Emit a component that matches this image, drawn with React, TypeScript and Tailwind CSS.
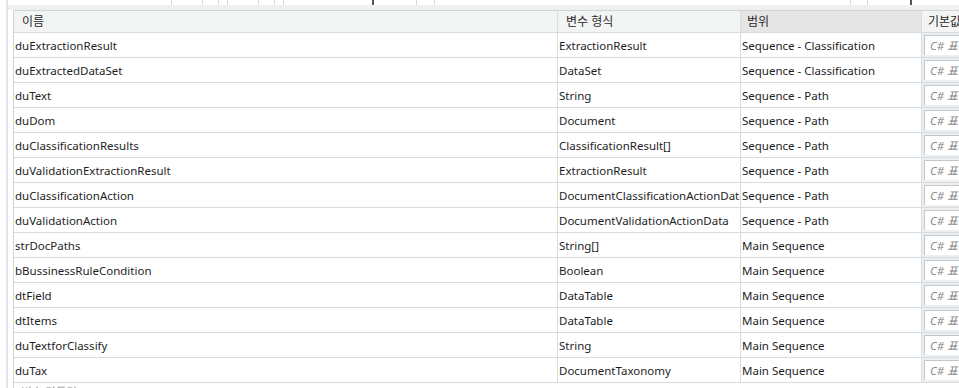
import React from "react";

const rows = [
  ["duExtractionResult", "ExtractionResult", "Sequence - Classification"],
  ["duExtractedDataSet", "DataSet", "Sequence - Classification"],
  ["duText", "String", "Sequence - Path"],
  ["duDom", "Document", "Sequence - Path"],
  ["duClassificationResults", "ClassificationResult[]", "Sequence - Path"],
  ["duValidationExtractionResult", "ExtractionResult", "Sequence - Path"],
  ["duClassificationAction", "DocumentClassificationActionData", "Sequence - Path"],
  ["duValidationAction", "DocumentValidationActionData", "Sequence - Path"],
  ["strDocPaths", "String[]", "Main Sequence"],
  ["bBussinessRuleCondition", "Boolean", "Main Sequence"],
  ["dtField", "DataTable", "Main Sequence"],
  ["dtItems", "DataTable", "Main Sequence"],
  ["duTextforClassify", "String", "Main Sequence"],
  ["duTax", "DocumentTaxonomy", "Main Sequence"],
];

// widths of the toolbar pieces peeking in at the top
const toolbar = [164, 31, 16, 9, 31, 16, 9, 90, 43, 18, 416, 17, 44];

const cell =
  "h-[25px] flex items-center overflow-hidden whitespace-nowrap border-b border-[#d5dde2] pt-[2px]";

export default function App() {
  return (
    <div className="flex h-[388px] w-[959px] overflow-hidden bg-white font-['Noto_Sans','Noto_Sans_CJK_KR',sans-serif] text-[11.5px] text-[#1e1e1e]">
      <div className="w-[6px] shrink-0 bg-white" />
      <div className="w-[2px] shrink-0 bg-[#e1e5e8]" />
      <div className="flex min-w-0 flex-1 flex-col">
        <div className="flex h-[5px] shrink-0">
          {toolbar.map((w, i) => (
            <div
              key={i}
              style={{ width: w }}
              className={
                i === 7 || i === 12
                  ? "shrink-0 border-r-2 border-[#555]"
                  : "shrink-0 border-r border-[#d4d8db]"
              }
            />
          ))}
        </div>
        <div className="h-[5px] shrink-0 bg-[#f0f0f0]" />
        <div className="flex flex-1 pl-[5px]">
          <div className="flex-1 border-l border-t border-[#cdd5da]">
            <div className="grid grid-cols-[544px_182px_181px_1fr]">
              <div className="flex h-[22px] items-center border-b border-r border-[#d5dde2] bg-[#f3f4f4] pl-[8px] pt-[1px] text-[12px] text-[#2a2a2a]">
                이름
              </div>
              <div className="flex h-[22px] items-center border-b border-[#d5dde2] bg-[#f3f4f4] pl-[8px] pt-[1px] text-[12px] text-[#2a2a2a]">
                변수 형식
              </div>
              <div className="flex h-[22px] items-center border-b border-l border-[#d5dde2] bg-[#e6e6e6] pl-[6px] pt-[1px] text-[12px] text-[#2a2a2a]">
                범위
              </div>
              <div className="flex h-[22px] items-center overflow-hidden whitespace-nowrap border-b border-l border-[#d5dde2] bg-[#f3f4f4] pl-[6px] pt-[1px] text-[12px] text-[#2a2a2a]">
                기본값
              </div>
              {rows.map(([name, type, scope]) => (
                <React.Fragment key={name}>
                  <div className={`${cell} border-r pl-[1px]`}>{name}</div>
                  <div className={`${cell} pl-[1px]`}>{type}</div>
                  <div className={`${cell} border-l pl-[1px]`}>{scope}</div>
                  <div className="flex h-[25px] overflow-hidden whitespace-nowrap border-b border-l border-[#d5dde2] bg-[#eceeef] py-[2px] pl-[2px]">
                    <div className="flex h-full w-full items-center border-l border-t border-[#c4c8cb] bg-white pl-[5px] pt-[1px] italic text-[#8a8a8a]">
                      C# 표현식 입력
                    </div>
                  </div>
                </React.Fragment>
              ))}
              <div className="col-span-4 flex h-[25px] items-start pl-[5px] pt-[2px] italic leading-[14px] text-[#8a8a8a]">
                변수 만들기
              </div>
            </div>
          </div>
        </div>
      </div>
    </div>
  );
}
